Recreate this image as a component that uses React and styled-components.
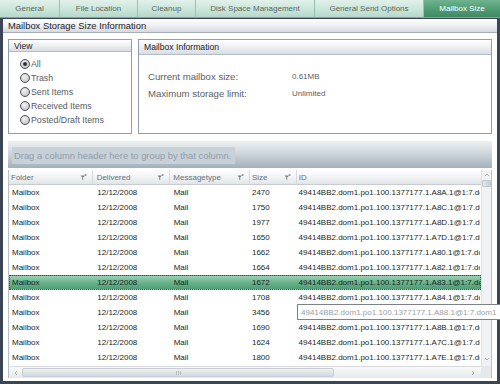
import React from 'react';
import styled, { createGlobalStyle } from 'styled-components';

const GlobalStyle = createGlobalStyle`
  html, body {
    margin: 0;
    padding: 0;
    background: #ffffff;
  }
  body {
    font-family: 'Liberation Sans', Arial, sans-serif;
    font-size: 8px;
  }
`;

const tabs = [
  { label: 'General', width: 60 },
  { label: 'File Location', width: 78 },
  { label: 'Cleanup', width: 58 },
  { label: 'Disk Space Management', width: 119 },
  { label: 'General Send Options', width: 109 },
  { label: 'Mailbox Size', width: 76, active: true },
];

const views = ['All', 'Trash', 'Sent Items', 'Received Items', 'Posted/Draft Items'];

const columns = [
  { label: 'Folder', width: 84, pad: 2 },
  { label: 'Delivered', width: 78, pad: 4 },
  { label: 'Messagetype', width: 80, pad: 3 },
  { label: 'Size', width: 47, pad: 2 },
  { label: 'ID', width: 185, pad: 2, noFilter: true },
];

const rows = [
  ['2470', 'A8A'],
  ['1750', 'A8C'],
  ['1977', 'A8D'],
  ['1650', 'A7D'],
  ['1662', 'A80'],
  ['1664', 'A82'],
  ['1672', 'A83'],
  ['1708', 'A84'],
  ['3456', 'A88'],
  ['1690', 'A8B'],
  ['1624', 'A7C'],
  ['1800', 'A7E'],
];

const SELECTED = 6;
const EDITING = 8;
const HEADER_H = 15;
const ROW_H = 15;

const Window = styled.div`
  width: 500px;
  height: 384px;
  display: flex;
  flex-direction: column;
  overflow: hidden;
`;

const TabBar = styled.div`
  display: flex;
  height: 18px;
  flex-shrink: 0;
  background: #c4e2d6;
`;

const Tab = styled.div`
  width: ${(p) => p.$width}px;
  box-sizing: border-box;
  display: flex;
  align-items: center;
  justify-content: center;
  font-size: 8px;
  color: ${(p) => (p.$active ? '#ffffff' : '#5a6660')};
  background: ${(p) =>
    p.$active
      ? 'linear-gradient(#6fb38f, #4d9a72 60%, #3f8a63)'
      : 'linear-gradient(#e2f1ea, #c8e4d8 60%, #b6d8ca)'};
  border-right: 1px solid ${(p) => (p.$active ? '#3f8a63' : '#8ec6b2')};
  border-bottom: 1px solid #7aa89a;
  &:last-child {
    border-right: none;
  }
`;

const Frame = styled.div`
  flex: 1;
  display: flex;
  flex-direction: column;
  border: 3px solid #3b4556;
  border-top: 1px solid #3b4556;
  background: #ffffff;
  min-height: 0;
`;

const TitleBar = styled.div`
  height: 14px;
  flex-shrink: 0;
  box-sizing: border-box;
  display: flex;
  align-items: center;
  padding-left: 5px;
  font-size: 9.4px;
  color: #1e2228;
  background: linear-gradient(#ffffff, #eef0f2 50%, #d6dadf);
  border-bottom: 1px solid #a6aeb8;
`;

const Body = styled.div`
  flex: 1;
  display: flex;
  flex-direction: column;
  padding: 6px 5px 3px;
  min-height: 0;
`;

const TopRow = styled.div`
  display: flex;
  gap: 6px;
  height: 95px;
  flex-shrink: 0;
`;

const Panel = styled.div`
  box-sizing: border-box;
  width: ${(p) => (p.$width ? `${p.$width}px` : 'auto')};
  flex: ${(p) => (p.$width ? '0 0 auto' : '1')};
  border: 1px solid #8e9eb0;
  display: flex;
  flex-direction: column;
`;

const PanelHeader = styled.div`
  height: ${(p) => p.$h}px;
  flex-shrink: 0;
  box-sizing: border-box;
  display: flex;
  align-items: center;
  padding-left: 5px;
  font-size: 8.6px;
  color: #222;
  background: linear-gradient(#ffffff, #eef0f2 50%, #d8dde2);
  border-bottom: 1px solid #b4bcc6;
`;

const RadioList = styled.div`
  display: flex;
  flex-direction: column;
  padding: 7px 0 0 11px;
  gap: 4px;
`;

const RadioRow = styled.label`
  display: flex;
  align-items: center;
  height: 10px;
  font-size: 8.8px;
  color: #555c63;
`;

const RadioCircle = styled.span`
  width: 8px;
  height: 8px;
  border-radius: 50%;
  border: 1px solid #4a4f55;
  background: radial-gradient(circle at 40% 35%, #f4f4f4, #b4b8bc);
  display: flex;
  align-items: center;
  justify-content: center;
  margin-right: 1px;
  &::after {
    content: '';
    width: 4px;
    height: 4px;
    border-radius: 50%;
    background: ${(p) => (p.$checked ? '#2a2e33' : 'transparent')};
  }
`;

const InfoGrid = styled.div`
  display: grid;
  grid-template-columns: 144px 1fr;
  row-gap: 6px;
  align-items: center;
  padding: 16px 0 0 9px;
  color: #5a6066;
`;

const InfoLabel = styled.span`
  font-size: 9.6px;
`;

const InfoValue = styled.span`
  font-size: 8px;
`;

const GroupBar = styled.div`
  margin-top: 7px;
  height: 27px;
  flex-shrink: 0;
  box-sizing: border-box;
  padding: 6px 4px 4px;
  background: linear-gradient(#eef1f3, #d0d7dc 45%, #a2b0ba);
`;

const GroupHint = styled.div`
  display: inline-flex;
  align-items: center;
  height: 17px;
  padding: 0 4px 0 2px;
  box-sizing: border-box;
  font-size: 9.4px;
  color: #8e9ca8;
  background: #c9d1d8;
`;

const Grid = styled.div`
  margin-top: 2px;
  flex: 1;
  display: grid;
  grid-template-columns: 1fr 10px;
  grid-template-rows: 1fr 12px;
  border-left: 1px solid #b8c0c8;
  border-right: 1px solid #b8c0c8;
  position: relative;
  min-height: 0;
`;

const GridMain = styled.div`
  display: flex;
  flex-direction: column;
  overflow: hidden;
`;

const HeaderRow = styled.div`
  display: flex;
  height: ${HEADER_H}px;
  flex-shrink: 0;
  box-sizing: border-box;
  background: linear-gradient(#ffffff, #f2f3f4 50%, #e2e5e8);
  border-bottom: 1px solid #c8ccd0;
`;

const HeaderCell = styled.div`
  width: ${(p) => p.$width}px;
  box-sizing: border-box;
  display: flex;
  align-items: center;
  justify-content: space-between;
  padding: 0 5px 0 ${(p) => p.$pad}px;
  font-size: 8px;
  color: #6a7078;
  border-right: 1px solid #d6dadd;
  &:last-child {
    border-right: none;
  }
`;

const Row = styled.div`
  display: flex;
  height: ${ROW_H}px;
  flex-shrink: 0;
  box-sizing: border-box;
  background: ${(p) =>
    p.$selected ? 'linear-gradient(#9ad0b2, #6db690 45%, #4f9e74)' : '#ffffff'};
  border: 1px ${(p) => (p.$selected ? 'dotted #2e5e44' : 'solid transparent')};
`;

const Cell = styled.div`
  width: ${(p) => p.$width}px;
  box-sizing: border-box;
  padding-left: ${(p) => p.$pad}px;
  display: flex;
  align-items: center;
  font-size: 8px;
  color: #1c1f22;
  white-space: nowrap;
  overflow: hidden;
`;

const EditBox = styled.div`
  position: absolute;
  left: 288px;
  top: ${(p) => p.$top}px;
  width: 210px;
  height: 16px;
  box-sizing: border-box;
  display: flex;
  align-items: center;
  padding-left: 3px;
  border: 1px solid #7c8288;
  background: #ffffff;
  font-size: 8px;
  color: #9aa0a6;
  white-space: nowrap;
  overflow: hidden;
  z-index: 2;
`;

const VScroll = styled.div`
  display: flex;
  flex-direction: column;
  justify-content: space-between;
  align-items: center;
  padding: 2px 0 4px;
  background: #f0f2f4;
  border-left: 1px solid #dfe2e5;
`;

const VTop = styled.div`
  display: flex;
  flex-direction: column;
  align-items: center;
  gap: 2px;
`;

const VThumb = styled.div`
  width: 7px;
  height: 5px;
  background: linear-gradient(90deg, #e4e7ea, #c8cdd2);
  border: 1px solid #c2c8ce;
  border-radius: 1px;
`;

const HScroll = styled.div`
  display: flex;
  align-items: center;
  gap: 3px;
  padding: 0 5px 0 4px;
  background: linear-gradient(#f8f9fa, #e6e9ec);
  border-top: 1px solid #d8dcdf;
`;

const HThumb = styled.div`
  width: 312px;
  height: 9px;
  display: flex;
  align-items: center;
  justify-content: center;
  box-sizing: border-box;
  border: 1px solid #c9ced3;
  border-radius: 2px;
  background: linear-gradient(#eef0f2, #d4d9de);
`;

const Grip = styled.span`
  width: 5px;
  height: 4px;
  border-left: 1px solid #b8bec4;
  border-right: 1px solid #b8bec4;
  box-sizing: border-box;
  background: linear-gradient(90deg, transparent 40%, #b8bec4 40%, #b8bec4 60%, transparent 60%);
`;

const HSpacer = styled.div`
  flex: 1;
`;

const Corner = styled.div`
  background: #e6e9ec;
`;

const FilterIcon = () => (
  <svg width="7" height="7" viewBox="0 0 7 7">
    <path d="M0.5 1.5 H5 L3.2 3.6 V6.2 L2.3 5.6 V3.6 Z" fill="#7c8288" />
    <path d="M5.6 0 V2 M4.6 1 H6.6" stroke="#7c8288" strokeWidth="0.8" />
  </svg>
);

const Chevron = ({ dir }) => {
  const paths = {
    up: 'M1 4 L3 2 L5 4',
    down: 'M1 2 L3 4 L5 2',
    left: 'M4 1 L2 3 L4 5',
    right: 'M2 1 L4 3 L2 5',
  };
  return (
    <svg width="6" height="6" viewBox="0 0 6 6">
      <path d={paths[dir]} fill="none" stroke="#aab0b6" strokeWidth="1" />
    </svg>
  );
};

const idFor = (code) => `49414BB2.dom1.po1.100.1377177.1.${code}.1@1:7.dom1`;

const App = () => (
  <>
    <GlobalStyle />
    <Window>
      <TabBar>
        {tabs.map((t) => (
          <Tab key={t.label} $width={t.width} $active={t.active}>
            {t.label}
          </Tab>
        ))}
      </TabBar>
      <Frame>
        <TitleBar>Mailbox Storage Size Information</TitleBar>
        <Body>
          <TopRow>
            <Panel $width={124}>
              <PanelHeader $h={12}>View</PanelHeader>
              <RadioList>
                {views.map((v, i) => (
                  <RadioRow key={v}>
                    <RadioCircle $checked={i === 0} />
                    {v}
                  </RadioRow>
                ))}
              </RadioList>
            </Panel>
            <Panel>
              <PanelHeader $h={15}>Mailbox Information</PanelHeader>
              <InfoGrid>
                <InfoLabel>Current mailbox size:</InfoLabel>
                <InfoValue>0.61MB</InfoValue>
                <InfoLabel>Maximum storage limit:</InfoLabel>
                <InfoValue>Unlimited</InfoValue>
              </InfoGrid>
            </Panel>
          </TopRow>
          <GroupBar>
            <GroupHint>Drag a column header here to group by that column.</GroupHint>
          </GroupBar>
          <Grid>
            <GridMain>
              <HeaderRow>
                {columns.map((c) => (
                  <HeaderCell key={c.label} $width={c.width} $pad={c.pad}>
                    {c.label}
                    {!c.noFilter && <FilterIcon />}
                  </HeaderCell>
                ))}
              </HeaderRow>
              {rows.map(([size, code], i) => (
                <Row key={code} $selected={i === SELECTED}>
                  <Cell $width={columns[0].width} $pad={2}>Mailbox</Cell>
                  <Cell $width={columns[1].width} $pad={4}>12/12/2008</Cell>
                  <Cell $width={columns[2].width} $pad={3}>Mail</Cell>
                  <Cell $width={columns[3].width} $pad={2}>{size}</Cell>
                  <Cell $width={columns[4].width} $pad={2}>
                    {i === EDITING ? '' : idFor(code)}
                  </Cell>
                </Row>
              ))}
            </GridMain>
            <VScroll>
              <VTop>
                <Chevron dir="up" />
                <VThumb />
              </VTop>
              <Chevron dir="down" />
            </VScroll>
            <HScroll>
              <Chevron dir="left" />
              <HThumb>
                <Grip />
              </HThumb>
              <HSpacer />
              <Chevron dir="right" />
            </HScroll>
            <Corner />
            <EditBox $top={HEADER_H + EDITING * ROW_H - 1}>{idFor(rows[EDITING][1])}</EditBox>
          </Grid>
        </Body>
      </Frame>
    </Window>
  </>
);

export default App;
